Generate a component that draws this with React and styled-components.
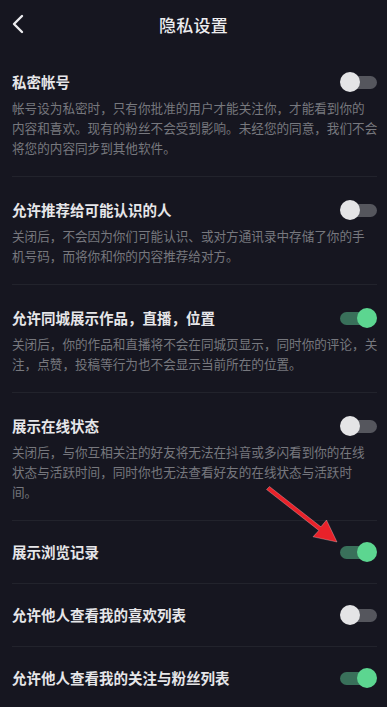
import React, { useState } from "react";
import styled, { createGlobalStyle } from "styled-components";

const GlobalStyle = createGlobalStyle`
  html, body {
    margin: 0;
    padding: 0;
    background: #161620;
  }
  body {
    font-family: "Noto Sans CJK SC", "Noto Sans", sans-serif;
    -webkit-font-smoothing: antialiased;
  }
`;

const Page = styled.div`
  position: relative;
  width: 387px;
  min-height: 707px;
  background: #161620;
  overflow: hidden;
`;

const Header = styled.div`
  display: grid;
  grid-template-columns: 40px 1fr 40px;
  align-items: center;
  height: 49px;
  padding-bottom: 1px;
  box-sizing: border-box;
`;

const BackButton = styled.div`
  display: flex;
  align-items: center;
  padding-left: 12px;
  height: 100%;
`;

const HeaderTitle = styled.h1`
  margin: 0;
  text-align: center;
  font-size: 17px;
  font-weight: 500;
  color: #ececef;
  letter-spacing: 0.2px;
`;

const List = styled.div`
  display: flex;
  flex-direction: column;
  padding: 0 10px 0 12px;
`;

const Row = styled.div`
  display: flex;
  flex-direction: column;
  padding: ${(p) => (p.$desc ? "22px 0 18px" : "20px 0 20px")};
  border-bottom: ${(p) => (p.$last ? "none" : "1px solid #22232c")};
`;

const RowHead = styled.div`
  display: flex;
  align-items: center;
  justify-content: space-between;
  height: 22px;
`;

const RowTitle = styled.div`
  font-size: 14.5px;
  font-weight: 700;
  color: #e6e6e9;
  line-height: 22px;
`;

const Desc = styled.div`
  margin-top: 5px;
  font-size: 12.6px;
  line-height: 20px;
  color: #77787e;
`;

const DescLine = styled.span`
  display: block;
  white-space: nowrap;
`;

const Track = styled.button`
  position: relative;
  width: 37px;
  height: 20px;
  padding: 0;
  border: none;
  background: transparent;
  cursor: pointer;
  flex-shrink: 0;

  &::before {
    content: "";
    position: absolute;
    left: ${(p) => (p.$on ? "0" : "6px")};
    right: ${(p) => (p.$on ? "6px" : "0")};
    top: 3.5px;
    height: 13px;
    border-radius: 7px;
    background: ${(p) => (p.$on ? "#39705a" : "#55565d")};
  }
`;

const Knob = styled.span`
  position: absolute;
  top: 0;
  left: ${(p) => (p.$on ? "17px" : "0")};
  width: 20px;
  height: 20px;
  border-radius: 50%;
  background: ${(p) => (p.$on ? "#5cd690" : "#e4e4e6")};
`;

const Arrow = styled.svg`
  position: absolute;
  left: 265px;
  top: 485px;
  width: 80px;
  height: 62px;
  pointer-events: none;
`;

const Toggle = ({ initial }) => {
  const [on, setOn] = useState(initial);
  return (
    <Track $on={on} onClick={() => setOn(!on)}>
      <Knob $on={on} />
    </Track>
  );
};

const settings = [
  {
    title: "私密帐号",
    on: false,
    desc: [
      "帐号设为私密时，只有你批准的用户才能关注你，才能看到你的",
      "内容和喜欢。现有的粉丝不会受到影响。未经您的同意，我们不会",
      "将您的内容同步到其他软件。",
    ],
  },
  {
    title: "允许推荐给可能认识的人",
    on: false,
    desc: [
      "关闭后，不会因为你们可能认识、或对方通讯录中存储了你的手",
      "机号码，而将你和你的内容推荐给对方。",
    ],
  },
  {
    title: "允许同城展示作品，直播，位置",
    on: true,
    desc: [
      "关闭后，你的作品和直播将不会在同城页显示，同时你的评论，关",
      "注，点赞，投稿等行为也不会显示当前所在的位置。",
    ],
  },
  {
    title: "展示在线状态",
    on: false,
    desc: [
      "关闭后，与你互相关注的好友将无法在抖音或多闪看到你的在线",
      "状态与活跃时间，同时你也无法查看好友的在线状态与活跃时",
      "间。",
    ],
  },
  { title: "展示浏览记录", on: true },
  { title: "允许他人查看我的喜欢列表", on: false },
  { title: "允许他人查看我的关注与粉丝列表", on: true },
];

export default function App() {
  return (
    <Page>
      <GlobalStyle />
      <Header>
        <BackButton>
          <svg width="12" height="20" viewBox="0 0 12 20">
            <path d="M10 2 L2 10 L10 18" fill="none" stroke="#ececef" strokeWidth="2.4" strokeLinecap="round" strokeLinejoin="round" />
          </svg>
        </BackButton>
        <HeaderTitle>隐私设置</HeaderTitle>
        <div />
      </Header>
      <List>
        {settings.map((s, i) => (
          <Row key={i} $desc={!!s.desc} $last={i === settings.length - 1}>
            <RowHead>
              <RowTitle>{s.title}</RowTitle>
              <Toggle initial={s.on} />
            </RowHead>
            {s.desc && (
              <Desc>
                {s.desc.map((line, j) => (
                  <DescLine key={j}>{line}</DescLine>
                ))}
              </Desc>
            )}
          </Row>
        ))}
      </List>
      <Arrow viewBox="0 0 80 62">
        <polygon
          points="1.5,4.5 4.5,1.5 55.9,41.8 61.5,35 72,57 48,51.8 53.8,45.4"
          fill="#e8222a"
          stroke="rgba(255,255,255,0.35)"
          strokeWidth="0.8"
          strokeLinejoin="round"
        />
      </Arrow>
    </Page>
  );
}
